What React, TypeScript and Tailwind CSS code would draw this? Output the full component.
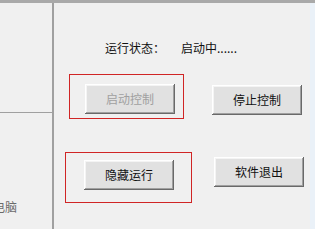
import React from 'react';

const btn =
  'flex items-center justify-center w-[90px] h-[30px] bg-[#e1e1e1] text-[12px] shadow-[inset_-1px_-1px_#696969,inset_1px_1px_#ffffff,inset_-2px_-2px_#a0a0a0,inset_2px_2px_#f4f4f4]';

function Button({ label, disabled = false, className = '' }: { label: string; disabled?: boolean; className?: string }) {
  return (
    <div className={`${btn} ${disabled ? 'text-[#a0a0a0]' : 'text-[#111]'} ${className}`}>
      {label}
    </div>
  );
}

export default function App() {
  return (
    <div
      className="w-[315px] h-[229px] bg-[#f0f0f0] flex flex-col overflow-hidden"
      style={{ fontFamily: '"Noto Sans CJK SC", "Noto Sans", sans-serif' }}
    >
      <div className="h-[3px] bg-[#a9a9a9]" />
      <div className="flex flex-1">
        {/* left panel */}
        <div className="w-[54px] border-r-[2px] border-[#a0a0a0] flex flex-col">
          <div className="h-[110px] border-b border-[#a0a0a0]" />
          <div className="ml-[-7px] mt-[87px] text-[12px] leading-[14px] text-[#6a6a6a] whitespace-nowrap">
            电脑
          </div>
        </div>

        {/* main */}
        <div className="flex-1 flex flex-col">
          <div className="mt-[37px] pl-[51px] flex text-[12px] leading-[16px] text-[#111]">
            <span className="w-[76px]">运行状态：</span>
            <span>启动中......</span>
          </div>

          <div className="mt-[18px] ml-[15px] flex items-start">
            <div className="w-[115px] h-[45px] border border-[#d02525] pl-[15px] pt-[9px]">
              <Button label="启动控制" disabled />
            </div>
            <Button label="停止控制" className="ml-[28px] mt-[11px]" />
          </div>

          <div className="mt-[33px] ml-[11px] flex items-start">
            <div className="w-[127px] h-[51px] border border-[#d02525] pl-[18px] pt-[7px]">
              <Button label="隐藏运行" className="h-[29px]" />
            </div>
            <Button label="软件退出" className="ml-[22px] mt-[5px]" />
          </div>
        </div>

        <div className="w-[5px] bg-[#eaf1f8]" />
      </div>
    </div>
  );
}
